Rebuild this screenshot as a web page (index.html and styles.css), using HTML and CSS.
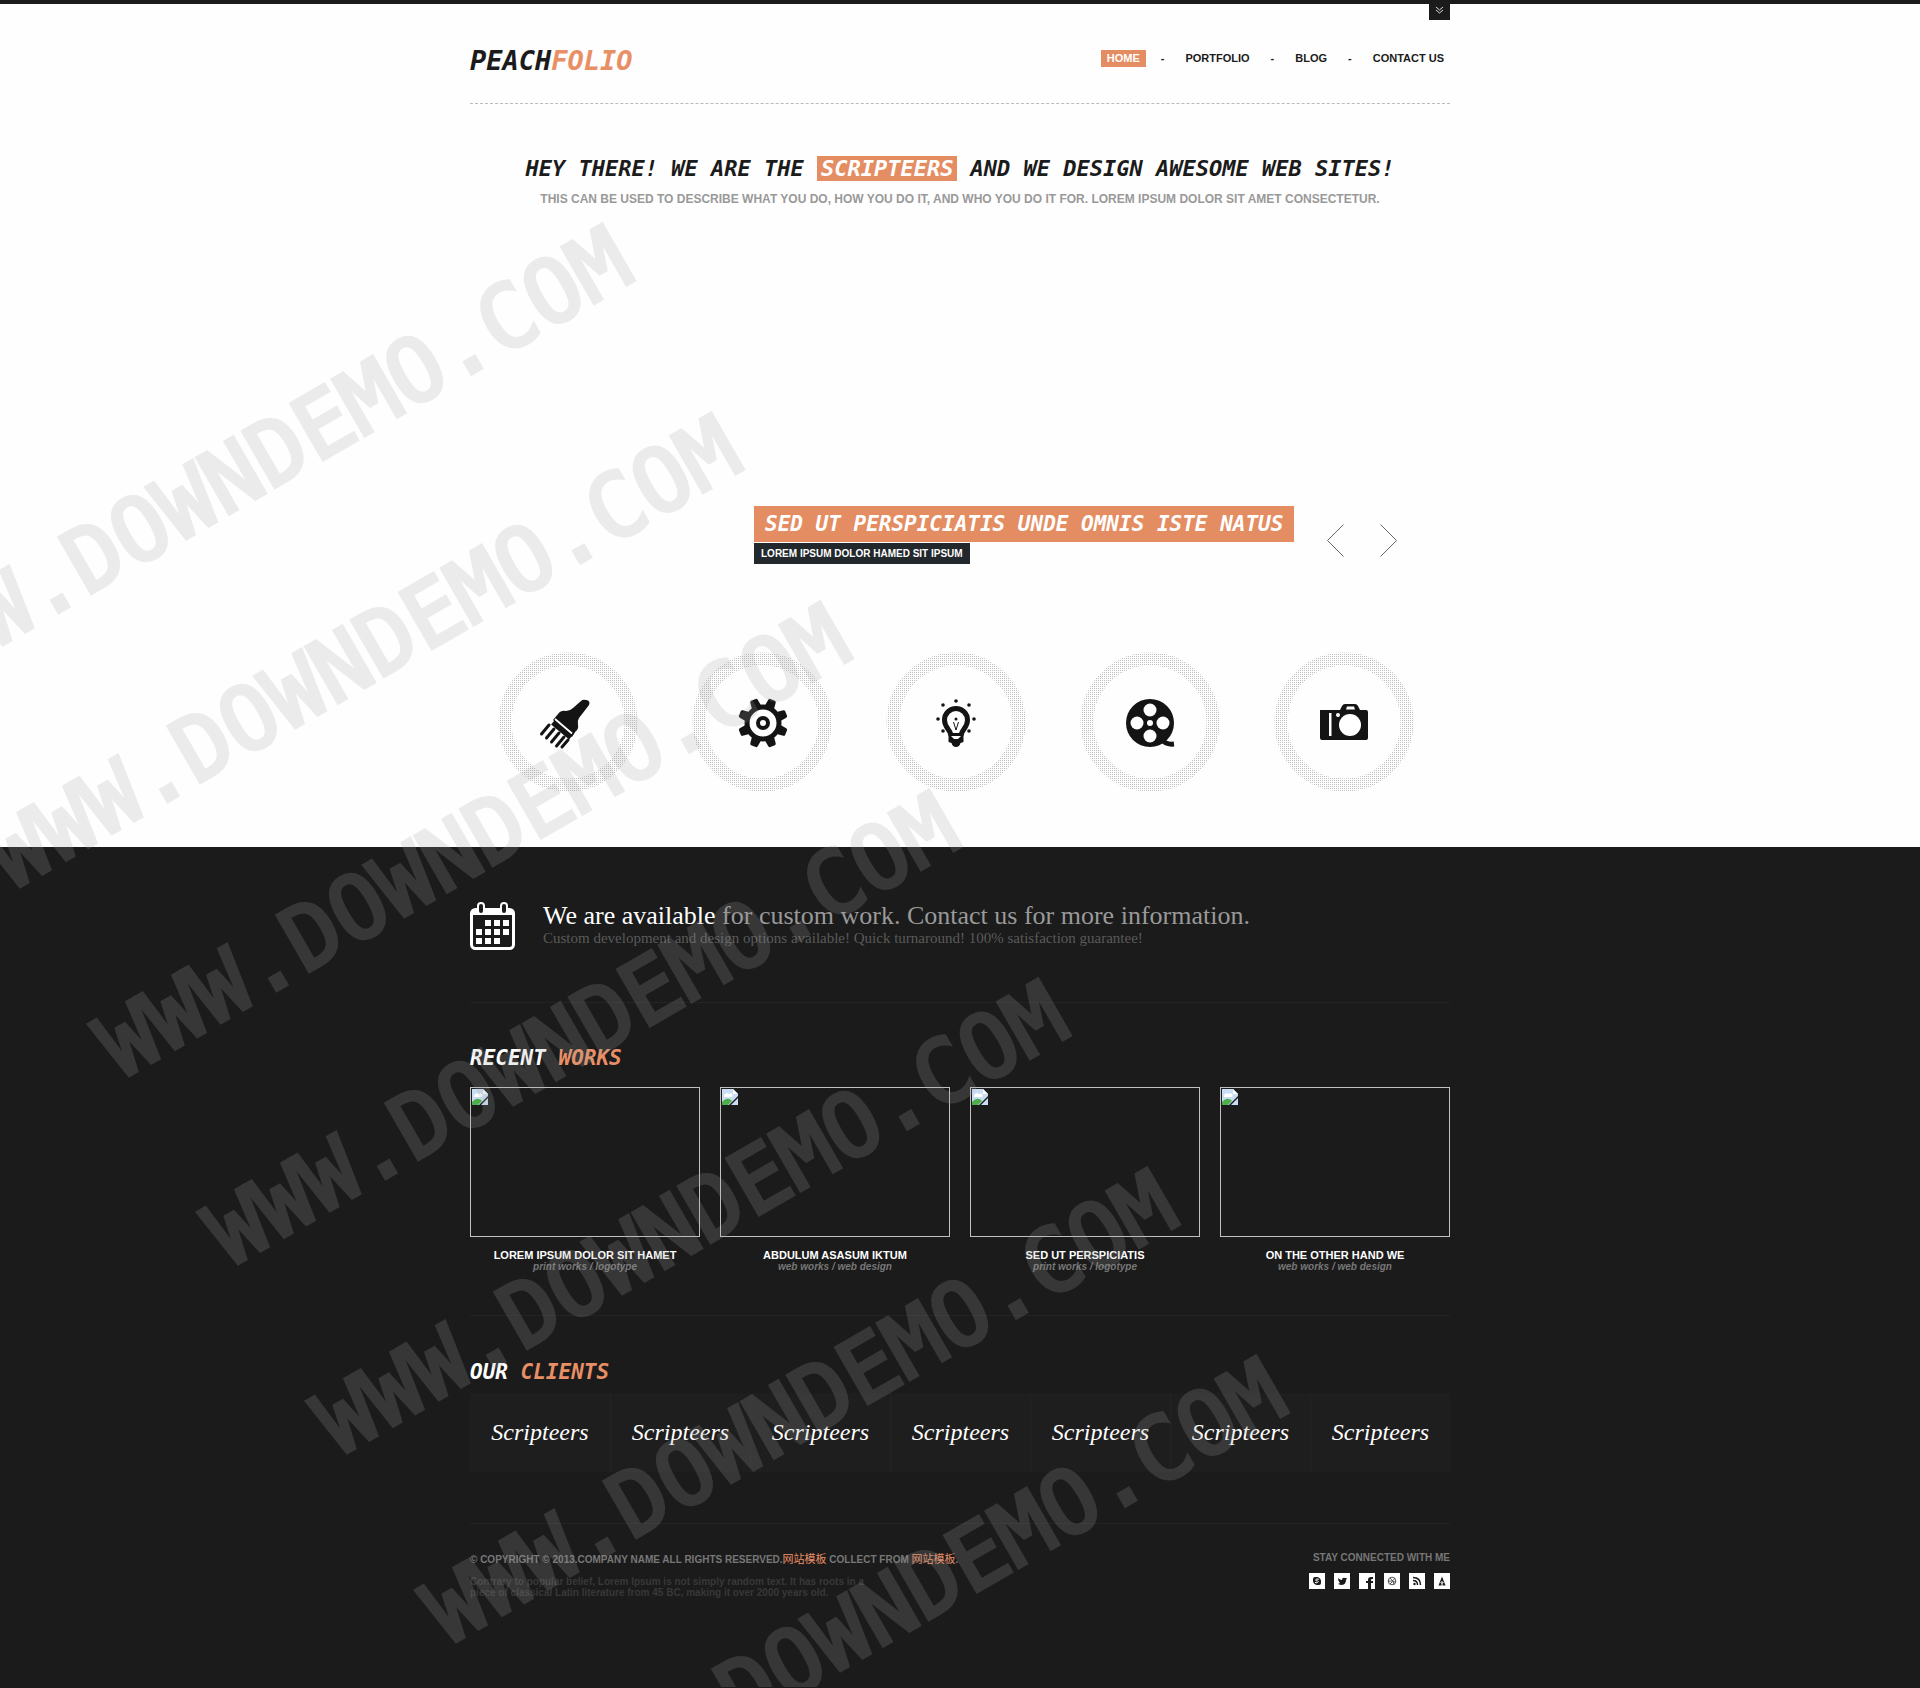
FILE: index.html
```html
<!DOCTYPE html>
<html lang="en">
<head>
<meta charset="utf-8">
<title>Peachfolio</title>
<link rel="stylesheet" href="styles.css">
</head>
<body>
<svg width="0" height="0" class="defs" aria-hidden="true">
  <defs>
    <pattern id="dots" width="2" height="2" patternUnits="userSpaceOnUse"><rect width="1" height="1" fill="#c0c0c0"/></pattern>
    <symbol id="ring" viewBox="0 0 140 140"><circle cx="70" cy="70" r="63" fill="none" stroke="url(#dots)" stroke-width="13"/></symbol>
    <symbol id="broken" viewBox="0 0 16 16">
      <path d="M0 0h11l5 5v11H0z" fill="#c9def5"/><path d="M11 0l5 5h-5z" fill="#fff"/>
      <path d="M2 7a3 3 0 0 1 5-2 2 2 0 0 1 3 3H2z" fill="#fff"/>
      <path d="M0 16v-3c4-4 7-4 10-1l-4 4z" fill="#4cae4c"/><path d="M7 16l9-9v2l-7 7z" fill="#1b1b1b"/>
    </symbol>
  </defs>
</svg>

<div class="top">
  <header class="wrap header">
    <button class="toggle" aria-label="Open panel"><svg width="9" height="8" viewBox="0 0 9 8" fill="none" stroke="#ddd"><path d="M1 1l3.500 3L8 1M1 4l3.500 3L8 4"/></svg></button>
    <a class="logo" href="#">PEACH<span>FOLIO</span></a>
    <nav class="nav">
      <a class="on" href="#">HOME</a><i>-</i><a href="#">PORTFOLIO</a><i>-</i><a href="#">BLOG</a><i>-</i><a href="#">CONTACT US</a>
    </nav>
  </header>
  <main class="wrap">
    <h1>HEY THERE! WE ARE THE <em>SCRIPTEERS</em> AND WE DESIGN AWESOME WEB SITES!</h1>
    <p class="tagline">THIS CAN BE USED TO DESCRIBE WHAT YOU DO, HOW YOU DO IT, AND WHO YOU DO IT FOR. LOREM IPSUM DOLOR SIT AMET CONSECTETUR.</p>
    <section class="slider">
      <div class="caption">
        <h2>SED UT PERSPICIATIS UNDE OMNIS ISTE NATUS</h2>
        <p>LOREM IPSUM DOLOR HAMED SIT IPSUM</p>
      </div>
      <div class="arrows">
        <button aria-label="Previous"><svg width="17" height="33" viewBox="0 0 17 33"><path d="M16.500 .5l-16 16 16 16"/></svg></button>
        <button aria-label="Next"><svg width="17" height="33" viewBox="0 0 17 33"><path d="M.5 .5l16 16-16 16"/></svg></button>
      </div>
    </section>
    <section class="services">
      <a href="#" aria-label="Painting"><svg width="140" height="140" viewBox="0 0 140 140"><use href="#ring"/>
        <path fill="#141414" d="M88 48q3 0 3.500 3 0 2-2 4L81 66q-2 3-1 7 1 4-3 7l-3 5L55 68l5-6q3-4 8-3 4 0 7-3l8-7q2-2 5-1z"/>
        <path d="M56 69l18 15" stroke="#141414" stroke-width="9"/>
        <path d="M57 67l17 14.500" stroke="#fff" stroke-width="1.800"/>
        <path d="M51 73l-7.500 9M56 77l-7.500 9M61 81l-7.500 9M66 85l-7.500 9M70 88l-6 7" stroke="#141414" stroke-width="3" stroke-linecap="round"/></svg></a>
      <a href="#" aria-label="Development"><svg width="140" height="140" viewBox="0 0 140 140"><use href="#ring"/>
        <g transform="translate(71 71)" fill="#141414"><circle r="16" fill="none" stroke="#141414" stroke-width="5"/>
        <g id="teeth"><path d="M-5-16l1-7.500q.3-1.500 1.500-1.500h5q1.200 0 1.500 1.500l1 7.500z" transform="rotate(22.500)"/><path d="M-5-16l1-7.500q.3-1.500 1.500-1.500h5q1.200 0 1.500 1.500l1 7.500z" transform="rotate(67.500)"/></g>
        <use href="#teeth" transform="rotate(90)"/><use href="#teeth" transform="rotate(180)"/><use href="#teeth" transform="rotate(270)"/>
        <circle r="5" fill="none" stroke="#141414" stroke-width="4"/></g></svg></a>
      <a href="#" aria-label="Ideas"><svg width="140" height="140" viewBox="0 0 140 140"><use href="#ring"/>
        <path d="M65 84c0-6-6.500-8-6.500-16a11.500 11.500 0 0 1 23 0c0 8-6.500 10-6.500 16" fill="none" stroke="#141414" stroke-width="5"/>
        <path d="M67.500 70l2.500 8 2.500-8" stroke="#141414" fill="none"/>
        <path d="M62.500 81h15v9l-3 1q-1 4-4.500 4t-4.500-4l-3-1z" fill="#141414"/><path d="M65 84h10l-3 3h-4z" fill="#fff"/>
        <g fill="#141414"><circle cx="70" cy="49" r="1.800"/><circle cx="57" cy="53" r="1.800"/><circle cx="83" cy="53" r="1.800"/><circle cx="52" cy="67" r="1.800"/><circle cx="88" cy="67" r="1.800"/><circle cx="57" cy="79" r="1.800"/><circle cx="83" cy="79" r="1.800"/><circle cx="70" cy="67" r="1.500"/></g></svg></a>
      <a href="#" aria-label="Film"><svg width="140" height="140" viewBox="0 0 140 140"><use href="#ring"/>
        <circle cx="70" cy="71" r="24" fill="#141414"/><path d="M82 87q3 6 12 5" fill="none" stroke="#141414" stroke-width="5"/>
        <g fill="#fff"><circle cx="70" cy="58" r="6.500"/><circle cx="70" cy="84" r="6.500"/><circle cx="57" cy="71" r="6.500"/><circle cx="83" cy="71" r="6.500"/><circle cx="70" cy="71" r="3"/></g></svg></a>
      <a href="#" aria-label="Photography"><svg width="140" height="140" viewBox="0 0 140 140"><use href="#ring"/>
        <path fill="#141414" d="M46 58h20l2-4q1-2 3-2h10q2 0 3 2l2 4h6q2 0 2 2v26q0 2-2 2H48q-2 0-2-2V60z"/>
        <g fill="#fff"><path d="M73 54.500h7l1 3h-9z"/><rect x="55" y="61" width="2.500" height="23"/><circle cx="64" cy="63" r="2"/><circle cx="76" cy="73" r="11"/></g></svg></a>
    </section>
  </main>
</div>

<div class="wrap lower">
  <section class="avail">
    <svg width="45" height="48" viewBox="0 0 45 48"><rect x="1.500" y="7.500" width="42" height="39" rx="4" fill="none" stroke="#fff" stroke-width="3"/><path d="M2 7h41v6H2z" fill="#fff"/>
      <g fill="#1b1b1b" stroke="#fff" stroke-width="2"><rect x="8" y="1" width="6" height="11" rx="3"/><rect x="31" y="1" width="6" height="11" rx="3"/></g>
      <path fill="#fff" d="M15 18h6v6h-6zM24 18h6v6h-6zM33 18h6v6h-6zM6 27h6v6H6zM15 27h6v6h-6zM24 27h6v6h-6zM33 27h6v6h-6zM6 36h6v6H6zM15 36h6v6h-6zM24 36h6v6h-6z"/></svg>
    <div>
      <h2><span>We are available</span> for custom work. Contact us for more information.</h2>
      <p>Custom development and design options available! Quick turnaround! 100% satisfaction guarantee!</p>
    </div>
  </section>
  <section class="works">
    <h3>RECENT <span>WORKS</span></h3>
    <div class="grid">
      <a href="#"><div class="thumb"><svg width="16" height="16"><use href="#broken"/></svg></div><b>LOREM IPSUM DOLOR SIT HAMET</b><i>print works / logotype</i></a>
      <a href="#"><div class="thumb"><svg width="16" height="16"><use href="#broken"/></svg></div><b>ABDULUM ASASUM IKTUM</b><i>web works / web design</i></a>
      <a href="#"><div class="thumb"><svg width="16" height="16"><use href="#broken"/></svg></div><b>SED UT PERSPICIATIS</b><i>print works / logotype</i></a>
      <a href="#"><div class="thumb"><svg width="16" height="16"><use href="#broken"/></svg></div><b>ON THE OTHER HAND WE</b><i>web works / web design</i></a>
    </div>
  </section>
  <section class="clients">
    <h3>OUR <span>CLIENTS</span></h3>
    <div class="logos"><a href="#">Scripteers</a><a href="#">Scripteers</a><a href="#">Scripteers</a><a href="#">Scripteers</a><a href="#">Scripteers</a><a href="#">Scripteers</a><a href="#">Scripteers</a></div>
  </section>
  <footer class="footer">
    <div>
      <p class="copy">© COPYRIGHT © 2013.COMPANY NAME ALL RIGHTS RESERVED.<a href="#">网站模板</a> COLLECT FROM <a href="#">网站模板</a>.</p>
      <p class="note">Contrary to popular belief, Lorem Ipsum is not simply random text. It has roots in a<br>piece of classical Latin literature from 45 BC, making it over 2000 years old.</p>
    </div>
    <div class="social">
      <p>STAY CONNECTED WITH ME</p>
      <div>
        <a href="#" aria-label="Skype"><svg viewBox="0 0 16 16"><rect x="4" y="4" width="6" height="6" rx="2"/><rect x="6" y="6" width="6" height="6" rx="2"/><rect x="4.500" y="4.500" width="7" height="7" rx="3"/><path d="M9.800 6.300q-3-1-3 .6t1.700 1q1.700.6 0 1.600t-2.500-.4" stroke="#fff" fill="none"/></svg></a>
        <a href="#" aria-label="Twitter"><svg viewBox="0 0 16 16"><path d="M4 5q2 2 4 2 0-3 3-2l2 0-1 2q0 5-5 5l-3-1 2-1q-2-2-2-5z"/></svg></a>
        <a href="#" aria-label="Facebook"><svg viewBox="0 0 16 16"><path d="M9 16v-6H7V8h2V7q0-3 3-3h2v2h-1q-1 0-1 1v1h2v2h-2v6z"/></svg></a>
        <a href="#" aria-label="Dribbble"><svg viewBox="0 0 16 16"><g fill="none" stroke="#555"><circle cx="8" cy="8" r="3.800"/><path d="M6 5q4 3 4 7M4 8q5 1 7-3M6 11q2-4 6-2"/></g></svg></a>
        <a href="#" aria-label="RSS"><svg viewBox="0 0 16 16"><circle cx="5.500" cy="11" r="1.200"/><path d="M4 7.500q4.500 0 4.500 4.500M4 4.500q7.500 0 7.500 7.500" fill="none" stroke="#1b1b1b" stroke-width="1.500"/></svg></a>
        <a href="#" aria-label="Forrst"><svg viewBox="0 0 16 16"><path d="M8 3.500l3.500 9h-7z"/><path d="M8 13V8M6.500 9l1.500 1.500L9.500 9" stroke="#fff" fill="none"/></svg></a>
      </div>
    </div>
  </footer>
</div>

<svg class="mark" aria-hidden="true">
  <text transform="translate(-97 702) rotate(-30)">WWW.DOWNDEMO.COM</text>
  <text transform="translate(12 891) rotate(-30)">WWW.DOWNDEMO.COM</text>
  <text transform="translate(121 1080) rotate(-30)">WWW.DOWNDEMO.COM</text>
  <text transform="translate(230 1268) rotate(-30)">WWW.DOWNDEMO.COM</text>
  <text transform="translate(339 1457) rotate(-30)">WWW.DOWNDEMO.COM</text>
  <text transform="translate(448 1646) rotate(-30)">WWW.DOWNDEMO.COM</text>
  <text transform="translate(557 1834) rotate(-30)">WWW.DOWNDEMO.COM</text>
</svg>
</body>
</html>
```
FILE: styles.css
```css
* { box-sizing: border-box; }
body {
  position: relative;
  margin: 0;
  background: #1b1b1b;
  font: bold 11px/14px "Liberation Sans", "Noto Sans CJK SC", sans-serif;
  color: #1b1b1b;
}
h1, h2, h3, p { margin: 0; }
a { color: inherit; text-decoration: none; }
button { padding: 0; border: 0; background: none; }
svg { display: block; }
.defs { position: absolute; }
.wrap { max-width: 980px; margin: 0 auto; }
.top { background: #fefefe; border-top: 4px solid #1b1b1b; padding-bottom: 55px; }

h1, h3, .logo, .caption h2 {
  font-family: "DejaVu Sans Mono", monospace;
  font-style: italic;
  font-weight: bold;
}

.header {
  position: relative;
  display: flex;
  justify-content: space-between;
  align-items: flex-start;
  padding: 40px 0 25px;
  border-bottom: 1px dashed #bbb;
}
.toggle {
  position: absolute;
  top: -4px;
  right: 0;
  width: 21px;
  height: 20px;
  background: #1b1b1b;
  display: grid;
  place-items: center;
}
.logo { font-size: 27px; line-height: 34px; }
.logo span, h3 span, .copy a { color: #e98f66; }
.nav { display: flex; gap: 15px; padding-top: 6px; line-height: 17px; }
.nav a { padding: 0 6px; }
.nav i { font-style: normal; }
.nav .on { background: #e58d62; color: #fff; }

h1 { margin-top: 49px; font-size: 22px; line-height: 32px; text-align: center; }
h1 em { display: inline-block; padding: 0 4px; line-height: 25px; background: #e58d62; color: #fff; }
.tagline { margin-top: 7px; font-size: 12px; color: #999; text-align: center; }

.slider { display: flex; justify-content: space-between; padding: 300px 53px 0 284px; }
.caption h2 { padding: 0 11px; background: #e58d62; color: #fff; font-size: 21px; line-height: 36px; }
.caption p { display: inline-block; margin-top: 1px; padding: 0 7px; background: #22282b; color: #fff; font-size: 10px; line-height: 21px; }
.arrows { display: flex; gap: 36px; padding-top: 18px; align-items: flex-start; }
.arrows path { fill: none; stroke: #666; }
.services { display: flex; justify-content: space-between; padding: 88px 36px 0 28px; }

.avail { display: flex; gap: 28px; padding: 55px 0 52px; border-bottom: 1px solid #232323; }
.avail h2, .avail p { font-family: "Liberation Serif", serif; font-weight: normal; }
.avail h2 { font-size: 26px; line-height: 28px; color: #999; }
.avail h2 span { color: #fff; }
.avail p { font-size: 15px; line-height: 16px; color: #5a5a5a; }

h3 { font-size: 21px; line-height: 28px; color: #fff; }
.works { padding: 41px 0 42px; border-bottom: 1px solid #232323; }
.grid { display: grid; grid-template-columns: repeat(4, 1fr); gap: 20px; margin-top: 15px; text-align: center; }
.thumb { height: 150px; margin-bottom: 12px; padding: 1px; border: 1px solid #c0c0c0; }
.grid b, .grid i { display: block; line-height: 12px; }
.grid b { color: #fff; }
.grid i { font-size: 10px; color: #777; }

.clients { padding: 42px 0 51px; border-bottom: 1px solid #232323; }
.logos { display: grid; grid-template-columns: repeat(7, 1fr); margin-top: 7px; background: #1e1e1e; }
.logos a { font: italic 24px/79px "Liberation Serif", serif; color: #fff; text-align: center; }
.logos a + a { border-left: 1px solid #232323; }

.footer { display: flex; justify-content: space-between; padding: 27px 0 89px; font-size: 10px; color: #777; }
.copy { line-height: 16px; }
.copy a { font-size: 11px; font-weight: normal; }
.note { margin-top: 8px; line-height: 11px; color: #383838; }
.social { text-align: right; }
.social div { display: flex; justify-content: flex-end; gap: 9px; margin-top: 8px; }
.social a { width: 16px; height: 16px; background: #fff; }
.social svg { fill: #1b1b1b; }

.mark { position: absolute; inset: 0; width: 100%; height: 100%; opacity: .2; pointer-events: none; overflow: hidden; }
.mark text { font: 88px "DejaVu Sans Mono", monospace; fill: #a5a5a5; stroke: #a5a5a5; stroke-width: 4; }
```
